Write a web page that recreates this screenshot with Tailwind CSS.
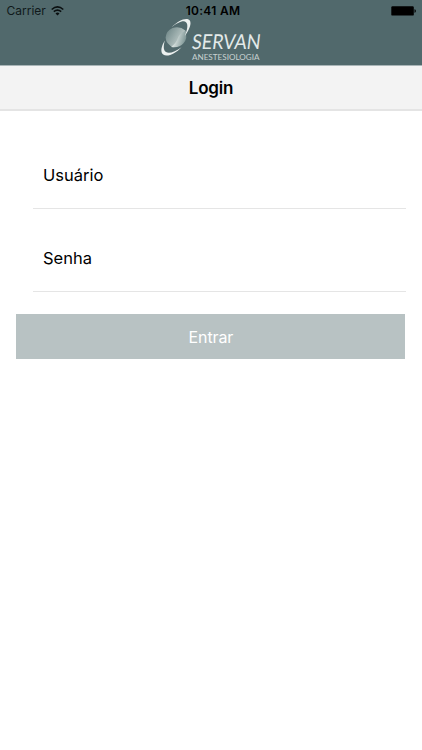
<!DOCTYPE html>
<html lang="pt-BR">
<head>
<meta charset="utf-8">
<meta name="viewport" content="width=device-width, initial-scale=1">
<title>Login</title>
<script src="https://cdn.jsdelivr.net/npm/@tailwindcss/browser@4"></script>
</head>
<body class="h-[750px] overflow-hidden bg-white font-['Inter','Liberation_Sans',sans-serif] text-black">
<header class="flex h-[66px] flex-col border-b border-[#a9b5b7] bg-[#51696c]">
  <div class="grid h-5 grid-cols-3 items-center pt-[2px] text-[12px] leading-[18px]">
    <div class="flex items-center gap-[5px] pl-[6.5px] text-[#10191b]">
      <span>Carrier</span>
      <svg class="-mt-px h-[10px] w-[13px]" viewBox="0 0 13 10" fill="none" stroke="#0b1011" stroke-width="1.6"><path d="M.7 3.5Q6.5-1.6 12.3 3.5M2.8 5.7Q6.5 2.4 10.2 5.7"/><path d="M4.5 7.4Q6.5 5.8 8.5 7.4L6.5 9.5Z" fill="#0b1011" stroke="none"/></svg>
    </div>
    <span class="text-center font-semibold tracking-[0.3px] whitespace-nowrap pl-1">10:41 AM</span>
    <div class="flex items-center justify-end pr-[6px]">
      <svg class="-mt-[1px] h-[10px] w-[25px]" viewBox="0 0 25 10"><rect x=".3" y=".2" width="22.5" height="9.4" rx="1.2"/><path d="M23.5 3.2h.4q1 .5 1 1.8t-1 1.8h-.4Z"/></svg>
    </div>
  </div>
  <svg class="-mt-[3px] ml-[158px] h-[48px] w-[110px] shrink-0 overflow-visible" viewBox="158 17 110 48">
    <defs>
      <linearGradient id="orb" x1="0" y1=".2" x2="1" y2=".8"><stop offset="0" stop-color="#708889"/><stop offset=".7" stop-color="#b5c3c1"/><stop offset="1" stop-color="#c9d4d2"/></linearGradient>
      <linearGradient id="orb-low" x1="0" y1="0" x2="1" y2=".3"><stop offset="0" stop-color="#f0f4f3"/><stop offset=".4" stop-color="#d3dddb"/><stop offset="1" stop-color="#819897"/></linearGradient>
    </defs>
    <path d="M165.6 37.5Q166 31 172.5 28Q180 25.8 185.3 30.5Q187.5 34 180 40L173.5 47.2Q166 44.5 165.6 37.5Z" fill="url(#orb)"/>
    <path d="M185.3 30.7Q188 38 183.5 43.2Q179 48.5 171 47Q176.5 43 178 37.8Q179.4 33.5 185.3 30.7Z" fill="url(#orb-low)"/>
    <path d="M171.5 27.2C178 20.5 186.5 16.8 189.6 20.2C192.1 23.2 189.1 30.2 184.8 36C187.2 30 188.5 24.5 186 22.2C183.3 19.8 177.5 22.8 171.5 27.2Z" fill="#edf1f0"/>
    <path d="M164.8 40.5C161.2 46.5 160.1 52 163.2 54.6C167.3 57.6 175.5 53.6 181.5 47.2C175.5 51.5 169.3 54.2 166 52.1C163.2 50.2 163.4 46 164.8 40.5Z" fill="#edf1f0"/>
    <text transform="translate(191.2 49.3) skewX(-7)" font-family="Lato, sans-serif" font-size="20.5" fill="#e3eae9" textLength="68.5" lengthAdjust="spacingAndGlyphs">SERVAN</text>
    <text x="192" y="60.3" font-family="Lato, sans-serif" font-size="8" fill="#c8d2d1" textLength="67.5" lengthAdjust="spacingAndGlyphs">ANESTESIOLOGIA</text>
  </svg>
</header>
<div class="flex h-[45px] items-center justify-center border-b-2 border-[#e4e4e4] bg-[#f3f3f3] pt-[2px]">
  <h1 class="text-[17px] font-semibold tracking-[-0.2px]">Login</h1>
</div>
<main class="px-4 pt-[31px]">
  <form>
    <label class="ml-[17px] flex h-[67px] items-center border-b border-[#e5e5e5] pt-px pl-[10px] text-[16.5px]">Usuário</label>
    <label class="mt-4 ml-[17px] flex h-[67px] items-center border-b border-[#e5e5e5] pt-px pl-[10px] text-[16.5px]">Senha</label>
    <button type="button" class="mt-[22px] ml-[0.4px] flex h-[45px] w-[389px] items-center justify-center bg-[#b8c2c3] text-[16px] tracking-[-0.1px] text-white">Entrar</button>
  </form>
</main>
</body>
</html>
